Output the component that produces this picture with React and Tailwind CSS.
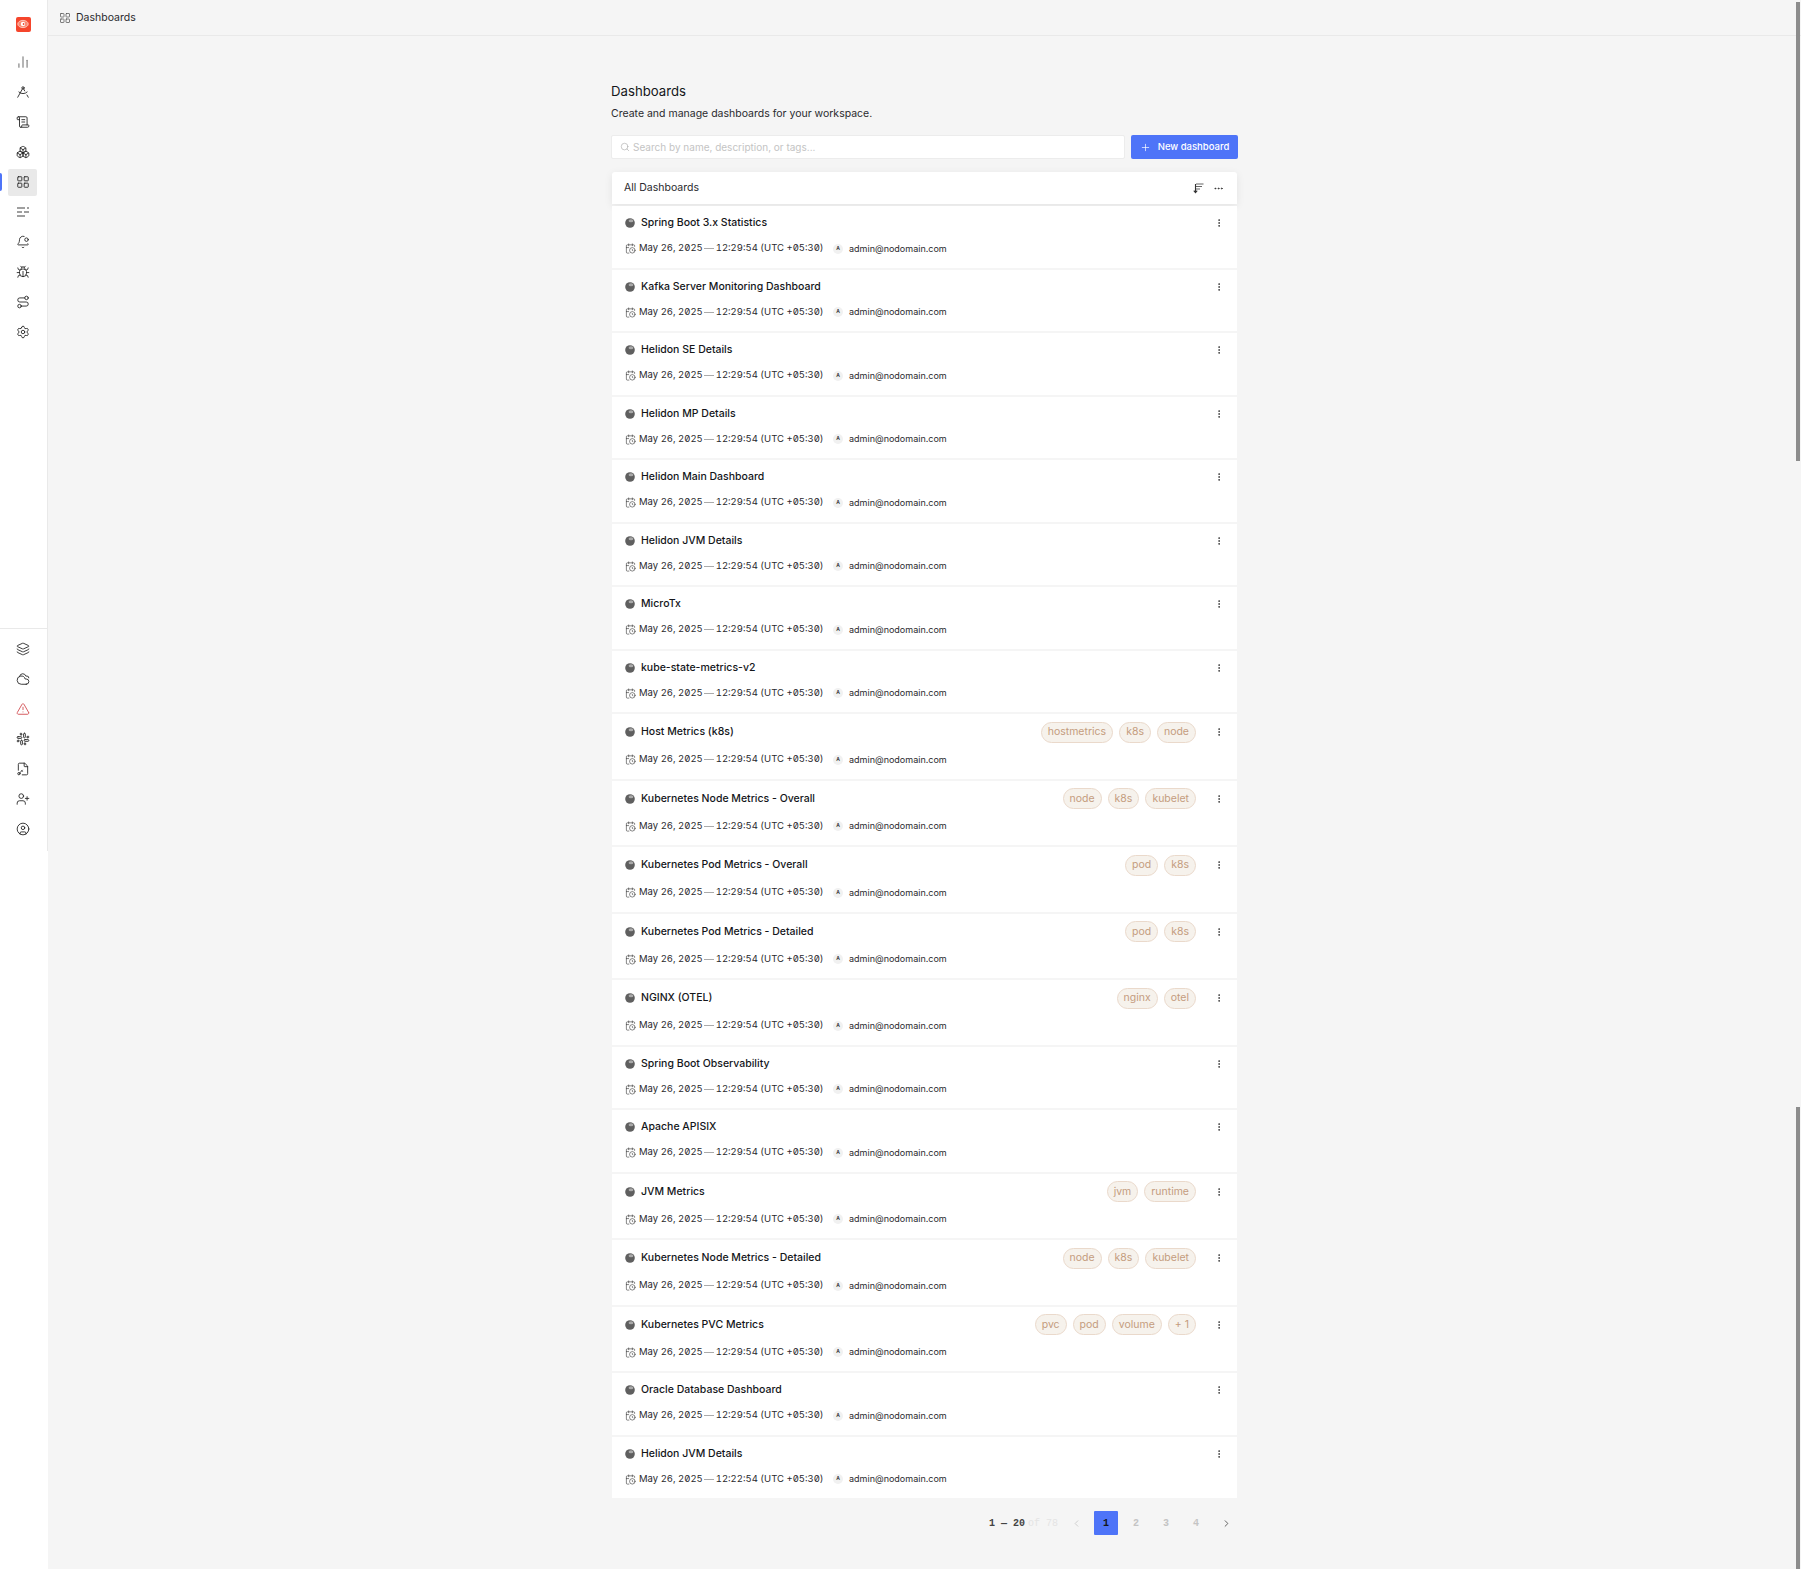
import {
  BarChart2, DraftingCompass, ScrollText, Boxes, LayoutGrid, BellDot, Bug, Route, Settings,
  Layers, Cloudy, TriangleAlert, Slack, FileKey2, UserPlus, CircleUser, Search, Plus, Ellipsis, EllipsisVertical,
  CalendarClock, ChevronLeft, ChevronRight,
} from 'lucide-react'

function LogsIcon({ size, className }) {
  return (
    <svg width={size} height={size} viewBox="0 0 14 14" className={className}>
      <path d="M1 3h8M11 3h2M1 7h5M8 7h5M1 11h8" fill="none" stroke="currentColor" strokeWidth="1.6" />
    </svg>
  )
}

const topNav = [BarChart2, DraftingCompass, ScrollText, Boxes, LayoutGrid, LogsIcon, BellDot, Bug, Route, Settings]
const bottomNav = [Layers, Cloudy, TriangleAlert, Slack, FileKey2, UserPlus, CircleUser]

const dashboards = [
  { name: 'Spring Boot 3.x Statistics' },
  { name: 'Kafka Server Monitoring Dashboard' },
  { name: 'Helidon SE Details' },
  { name: 'Helidon MP Details' },
  { name: 'Helidon Main Dashboard' },
  { name: 'Helidon JVM Details' },
  { name: 'MicroTx' },
  { name: 'kube-state-metrics-v2' },
  { name: 'Host Metrics (k8s)', tags: ['hostmetrics', 'k8s', 'node'] },
  { name: 'Kubernetes Node Metrics - Overall', tags: ['node', 'k8s', 'kubelet'] },
  { name: 'Kubernetes Pod Metrics - Overall', tags: ['pod', 'k8s'] },
  { name: 'Kubernetes Pod Metrics - Detailed', tags: ['pod', 'k8s'] },
  { name: 'NGINX (OTEL)', tags: ['nginx', 'otel'] },
  { name: 'Spring Boot Observability' },
  { name: 'Apache APISIX' },
  { name: 'JVM Metrics', tags: ['jvm', 'runtime'] },
  { name: 'Kubernetes Node Metrics - Detailed', tags: ['node', 'k8s', 'kubelet'] },
  { name: 'Kubernetes PVC Metrics', tags: ['pvc', 'pod', 'volume', '+ 1'] },
  { name: 'Oracle Database Dashboard' },
  { name: 'Helidon JVM Details', time: '12:22:54' },
]

function Logo() {
  return (
    <div className="flex h-[15px] w-[15px] items-center justify-center rounded-[2px] bg-[#f5452c]">
      <svg width="12" height="10" viewBox="0 0 12 10">
        <ellipse cx="6" cy="5" rx="5.2" ry="3.6" fill="#f98a72" stroke="#ffd9d0" strokeWidth="0.8" />
        <circle cx="6" cy="5" r="2.2" fill="#fff" />
        <circle cx="6.6" cy="5" r="0.9" fill="#f5452c" />
      </svg>
    </div>
  )
}

function Globe() {
  return (
    <svg width="10" height="10" viewBox="0 0 10 10" className="shrink-0">
      <circle cx="5" cy="5" r="4.8" fill="#5f5f5f" />
      <ellipse cx="6" cy="2.8" rx="2.4" ry="1.5" fill="#a9a9a9" />
    </svg>
  )
}

function SortIcon() {
  return (
    <svg width="11" height="11" viewBox="0 0 11 11" className="text-[#666]">
      <path d="M3 1h7.5M3 3.5h6M3 6h4" fill="none" stroke="currentColor" strokeWidth="1.2" />
      <path d="M2.5 1v8M.8 7.6 2.5 9.6l1.7-2" fill="none" stroke="#333" strokeWidth="1.1" />
    </svg>
  )
}

function Sidebar() {
  return (
    <aside className="w-[48px] shrink-0 bg-white">
      <div className="flex h-[851px] flex-col border-r border-[#e9e9e9]">
        <div className="flex h-[48px] w-[46px] items-center justify-center"><Logo /></div>
        <nav className="flex flex-col gap-[2px]">
          {topNav.map((Icon, i) => (
            <div key={i} className="relative flex h-[28px] items-center pl-[8px]">
              {i === 4 && <div className="absolute left-0 top-[5px] h-[18px] w-[2px] rounded-r-sm bg-[#4e74f8]" />}
              <div className={i === 4 ? 'flex h-[27px] w-[29px] items-center justify-center rounded-[2px] bg-[#e9e9e9]' : 'flex h-[27px] w-[29px] items-center justify-center'}>
                <Icon
                  size={14}
                  strokeWidth={i === 0 ? 2 : 1.5}
                  className={i === 0 || i === 5 ? 'text-[#808080]' : 'text-[#222]'}
                />
              </div>
            </div>
          ))}
        </nav>
        <div className="mt-auto border-t border-[#e9e9e9] pb-[8px] pt-[6px]">
          <div className="flex flex-col gap-[2px]">
            {bottomNav.map((Icon, i) => (
              <div key={i} className="flex h-[28px] w-[45px] items-center justify-center">
                <Icon size={14} strokeWidth={1.5} className={i === 2 ? 'text-[#d0474b]' : 'text-[#222]'} />
              </div>
            ))}
          </div>
        </div>
      </div>
    </aside>
  )
}

function Tag({ label }) {
  return (
    <span className="flex h-[21px] items-center rounded-[11px] border border-[#ead9cb] bg-[#f6f2ec] px-[6px] text-[10.5px] text-[#c49c7e]">
      {label}
    </span>
  )
}

function DashboardRow({ item }) {
  const hasTags = Boolean(item.tags)
  return (
    <div className={(hasTags ? 'h-[64.5px] pt-[8px] ' : 'h-[61.5px] pt-[7px] ') + 'flex flex-col justify-between bg-white pb-[13px] pl-[13px] pr-[13px]'}>
      <div className="flex h-[20px] items-center justify-between">
        <div className="flex items-center gap-[6px]">
          <Globe />
          <span className="text-[10.5px] font-medium text-[#14161a]">{item.name}</span>
        </div>
        <div className="flex items-center">
          {hasTags && (
            <div className="mr-[18px] flex gap-[6px]">
              {item.tags.map((t) => <Tag key={t} label={t} />)}
            </div>
          )}
          <EllipsisVertical size={10} strokeWidth={2} className="text-[#333]" />
        </div>
      </div>
      <div className="flex h-[12px] items-center text-[9px] text-[#2a2a2e]">
        <CalendarClock size={11} strokeWidth={1.3} className="mr-[3px] shrink-0 text-[#333]" />
        <span className="flex w-[194px] items-center whitespace-nowrap text-[9.5px] tabular-nums slashed-zero">
          May 26, 2025
          <span className="mx-[1.5px] h-[1px] w-[10px] bg-[#aaa]" />
          {item.time || '12:29:54'} (UTC +05:30)
        </span>
        <span className="mr-[6px] flex h-[10px] w-[10px] shrink-0 items-center justify-center rounded-full bg-[#f1f1f1] text-[5px] font-semibold">A</span>
        <span>admin@nodomain.com</span>
      </div>
    </div>
  )
}

export default function App() {
  return (
    <div className="relative flex min-h-[1569px] overflow-hidden bg-[#f5f5f5] font-['Inter',sans-serif] text-[#14161a]">
      <Sidebar />
      <main className="min-w-0 flex-1">
        <header className="flex h-[36px] items-center gap-[5px] border-b border-[#e9e9e9] pl-[11px] text-[10.5px] text-[#2a2a2e]">
          <LayoutGrid size={12} strokeWidth={1.5} className="text-[#555]" />
          Dashboards
        </header>
        <div className="ml-[563px] w-[627px] pt-[45px]">
          <h1 className="text-[13.2px] leading-[20px] text-[#14161a]">Dashboards</h1>
          <p className="mt-[5px] text-[10.5px] leading-[16px] text-[#2a2a2e]">Create and manage dashboards for your workspace.</p>
          <div className="mt-[13px] flex gap-[6px]">
            <div className="flex h-[24px] flex-1 items-center gap-[3px] rounded-[2px] border border-[#ececec] bg-white pl-[8px] text-[10px] text-[#c4c4c4]">
              <Search size={10} strokeWidth={1.5} className="text-[#aaa]" />
              Search by name, description, or tags...
            </div>
            <button className="flex h-[24px] w-[107px] items-center justify-center gap-[7px] rounded-[2px] bg-[#4e74f8] text-[9.5px] font-medium text-white">
              <Plus size={11} strokeWidth={1.5} />
              New dashboard
            </button>
          </div>
          <div className="px-[1px]">
            <div className="mt-[13px] flex h-[32px] items-center justify-between rounded-t-[3px] bg-white pl-[12px] pr-[13px] text-[10.5px] text-[#2a2a2e] shadow-[0_2px_8px_rgba(0,0,0,0.08)]">
              All Dashboards
              <div className="flex items-center gap-[9px]">
                <SortIcon />
                <Ellipsis size={11} strokeWidth={2} className="text-[#333]" />
              </div>
            </div>
            <div className="mt-[2px] flex flex-col gap-[2px]">
              {dashboards.map((d, i) => <DashboardRow key={i} item={d} />)}
            </div>
          </div>
          <div className="mt-[13px] flex items-center justify-end gap-[6px] font-['Liberation_Mono',monospace] text-[10px]">
            <span className="whitespace-nowrap">
              <span className="font-bold text-[#444]">1 — 20</span>
              <span className="ml-[3px] text-[#e4e4e4]">of 78</span>
            </span>
            <span className="flex h-[24px] w-[24px] items-center justify-center"><ChevronLeft size={11} className="text-[#ccc]" /></span>
            <span className="flex h-[24px] w-[24px] items-center justify-center rounded-[1px] bg-[#4e74f8] font-bold text-[#14161a]">1</span>
            <span className="flex h-[24px] w-[24px] items-center justify-center font-bold text-[#c4c4c4]">2</span>
            <span className="flex h-[24px] w-[24px] items-center justify-center font-bold text-[#c4c4c4]">3</span>
            <span className="flex h-[24px] w-[24px] items-center justify-center font-bold text-[#c4c4c4]">4</span>
            <span className="flex h-[24px] w-[24px] items-center justify-center"><ChevronRight size={11} className="text-[#555]" /></span>
          </div>
        </div>
      </main>
      <div className="absolute right-[1px] top-[2px] h-[459px] w-[4px] bg-[#8c8c8c]" />
      <div className="absolute bottom-0 right-[1px] h-[462px] w-[4px] bg-[#8c8c8c]" />
    </div>
  )
}
